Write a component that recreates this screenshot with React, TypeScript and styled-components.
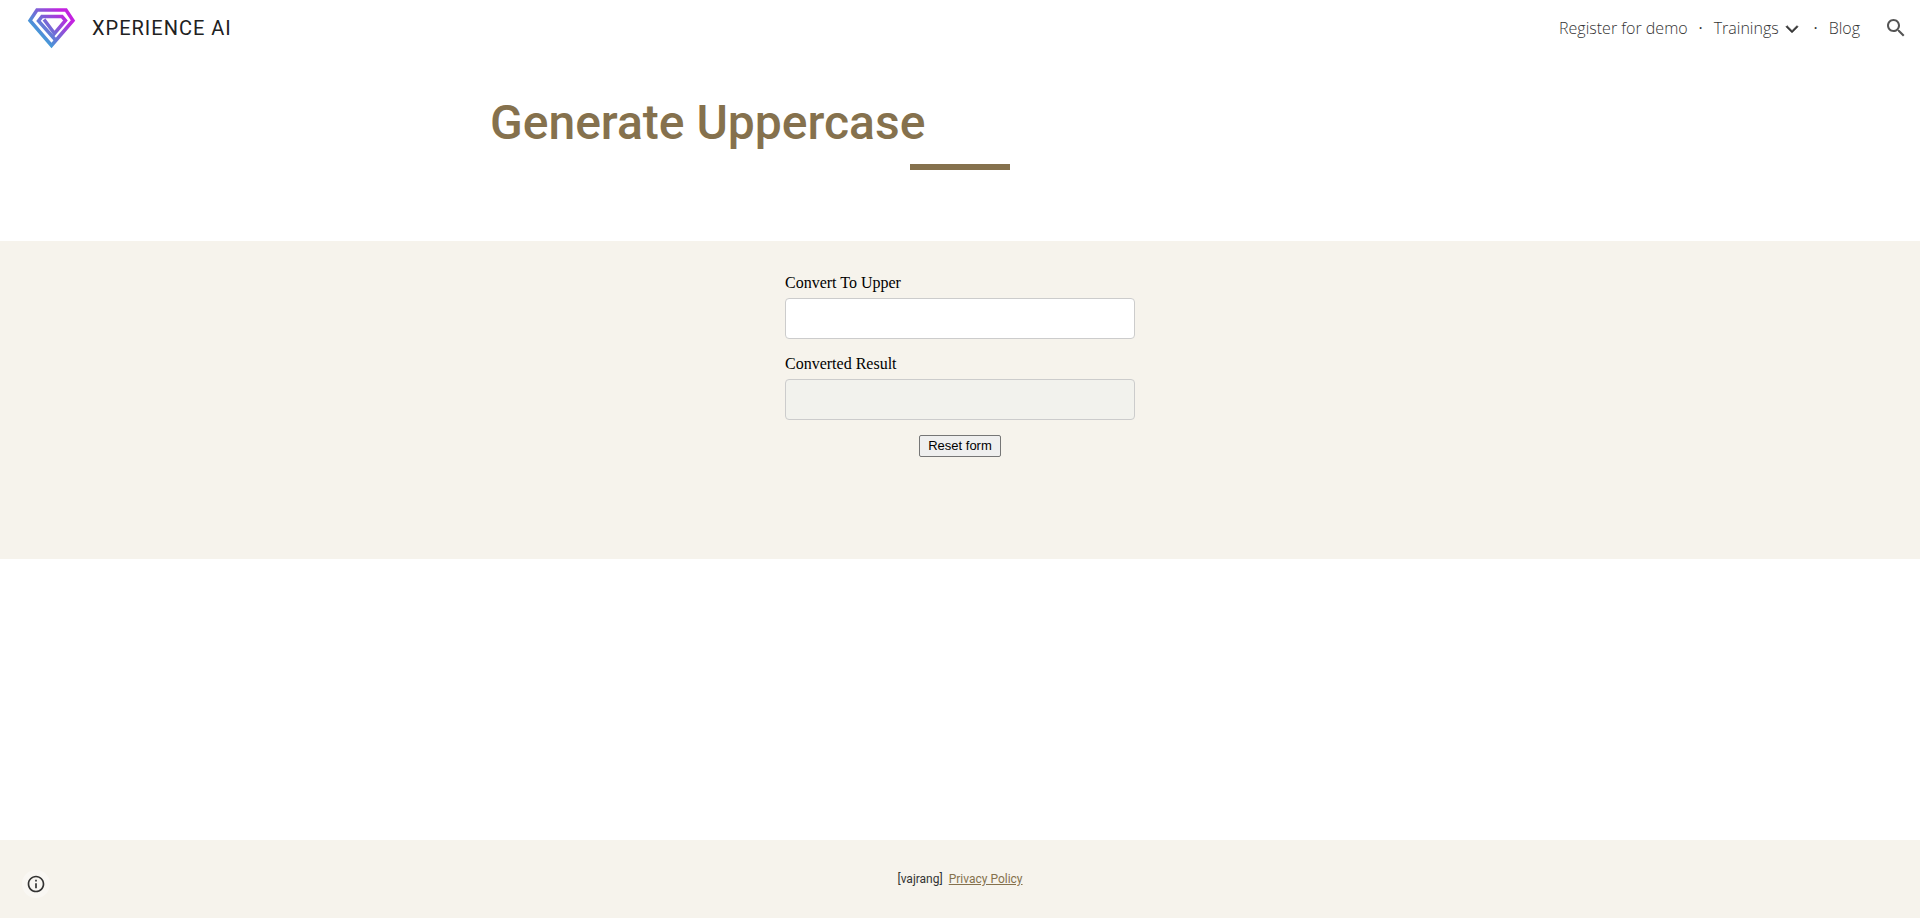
import React, { useState } from "react";
import styled, { createGlobalStyle } from "styled-components";

const GlobalStyle = createGlobalStyle`
  *, *::before, *::after { box-sizing: border-box; }
  body { margin: 0; background: #fff; color: #212121; font-family: Roboto, sans-serif; }
`;

const Page = styled.div`
  min-height: 100vh;
  display: flex;
  flex-direction: column;
`;

const Header = styled.header`
  height: 56px;
  padding: 0 6px 0 24px;
  display: flex;
  align-items: center;
  justify-content: space-between;
`;

const Brand = styled.a`
  display: flex;
  align-items: center;
  gap: 16px;
  color: #212121;
  text-decoration: none;
  font-size: 20px;
  line-height: 24px;
  letter-spacing: 1px;
`;

const Logo = styled.svg`
  width: 52px;
  height: 44px;
`;

const Nav = styled.nav`
  display: flex;
  align-items: center;
  font-family: "Open Sans", sans-serif;
  font-size: 16px;
  font-weight: 300;
  line-height: 24px;
  color: #333;
`;

const NavLink = styled.a`
  color: inherit;
  text-decoration: none;
`;

const Dot = styled.span`
  width: 26px;
  text-align: center;
  font-weight: 400;
`;

const IconButton = styled.button`
  display: flex;
  align-items: center;
  justify-content: center;
  width: 24px;
  height: 24px;
  padding: 0;
  border: 0;
  background: none;
  color: #333;
`;

const ExpandButton = styled(IconButton)`
  padding: 2px 0 0 2px;
`;

const SearchButton = styled(IconButton)`
  width: 36px;
  height: 40px;
  margin-left: 18px;
  color: #555;
`;

const Hero = styled.section`
  height: 185px;
  padding-top: 32px;
`;

const Title = styled.h1`
  max-width: 940px;
  margin: 0 auto;
  color: #85714d;
  font-size: 48px;
  font-weight: 500;
  line-height: 70px;
`;

const Rule = styled.hr`
  width: 100px;
  height: 6px;
  margin: 6px auto 0;
  border: 0;
  background: #85714d;
`;

const FormBand = styled.main`
  height: 318px;
  padding: 32px 16px;
  background: #f6f3ec;
`;

const Form = styled.form`
  max-width: 350px;
  margin: 0 auto;
  display: flex;
  flex-direction: column;
  align-items: center;
  gap: 15px;
`;

const Field = styled.label`
  width: 100%;
  display: flex;
  flex-direction: column;
  gap: 6px;
  color: #000;
  font-family: "Liberation Serif", serif;
  font-size: 16px;
  line-height: 19px;
`;

const TextInput = styled.input`
  width: 100%;
  height: 41px;
  padding: 8px 12px;
  border: 1px solid #ccc;
  border-radius: 4px;
  background: #fff;
  font-family: inherit;
  font-size: 16px;

  &:read-only { background: #f2f2ed; }
`;

const ResetButton = styled.button`
  height: 22px;
  padding: 1px 8px;
  border: 1px solid #767676;
  border-radius: 2px;
  background: #efefef;
  color: #000;
  font-family: "Liberation Sans", Arial, sans-serif;
  font-size: 13px;
  line-height: 16px;
`;

const Footer = styled.footer`
  height: 78px;
  margin-top: auto;
  padding: 0 24px;
  display: grid;
  grid-template-columns: 1fr auto 1fr;
  align-items: center;
  background: #f6f3ec;
`;

const InfoButton = styled(IconButton)`
  width: 28px;
  height: 28px;
  margin: 10px 0 0 -2px;
  border-radius: 50%;
  background: #f9f7f3;
`;

const FooterText = styled.p`
  margin: 0;
  font-size: 12px;
  line-height: 20px;
  color: #333;
`;

const FooterLink = styled.a`
  margin-left: 6px;
  color: #85714d;
`;

export default function App() {
  const [text, setText] = useState("");

  return (
    <Page>
      <GlobalStyle />
      <Header>
        <Brand href="#">
          <Logo viewBox="0 0 52 44" aria-hidden="true">
            <defs>
              <linearGradient id="gem" x1="16" y1="34" x2="42" y2="10" gradientUnits="userSpaceOnUse">
                <stop offset="0" stopColor="#38a6d8" />
                <stop offset="0.5" stopColor="#7b62d6" />
                <stop offset="1" stopColor="#c322e0" />
              </linearGradient>
            </defs>
            <g fill="none" stroke="url(#gem)" strokeWidth="3.500">
              <path d="M13 4H42L49 14.500L27.500 39.500L6 14.500Z" />
              <path d="M31.500 34L14.500 15L18 10.500H38L41.500 14.500L30.500 27.500L20 13.500" />
            </g>
          </Logo>
          XPERIENCE AI
        </Brand>
        <Nav>
          <NavLink href="#">Register for demo</NavLink>
          <Dot>·</Dot>
          <NavLink href="#">Trainings</NavLink>
          <ExpandButton type="button" aria-label="Expand Trainings">
            <svg width="18" height="18" viewBox="0 0 24 24" fill="currentColor" aria-hidden="true">
              <path d="M5.410 7.590L4 9l8 8 8-8-1.410-1.410L12 14.170z" stroke="currentColor" />
            </svg>
          </ExpandButton>
          <Dot>·</Dot>
          <NavLink href="#">Blog</NavLink>
          <SearchButton type="button" aria-label="Search">
            <svg width="24" height="24" viewBox="0 0 24 24" fill="currentColor" aria-hidden="true">
              <path d="M15.500 14h-.79l-.28-.27C15.410 12.590 16 11.110 16 9.500 16 5.910 13.090 3 9.500 3S3 5.910 3 9.500 5.910 16 9.500 16c1.610 0 3.090-.59 4.230-1.570l.27.28v.79l5 4.990L20.490 19l-4.990-5zm-6 0C7.010 14 5 11.990 5 9.500S7.010 5 9.500 5 14 7.010 14 9.500 11.990 14 9.500 14z" />
            </svg>
          </SearchButton>
        </Nav>
      </Header>
      <Hero>
        <Title>Generate Uppercase</Title>
        <Rule />
      </Hero>
      <FormBand>
        <Form onReset={() => setText("")}>
          <Field>
            Convert To Upper
            <TextInput type="text" value={text} onChange={(e) => setText(e.target.value)} />
          </Field>
          <Field>
            Converted Result
            <TextInput type="text" value={text.toUpperCase()} readOnly />
          </Field>
          <ResetButton type="reset">Reset form</ResetButton>
        </Form>
      </FormBand>
      <Footer>
        <InfoButton type="button" aria-label="Site information">
          <svg width="20" height="20" viewBox="0 0 24 24" fill="currentColor" aria-hidden="true">
            <path d="M11 17h2v-6h-2v6zm1-15C6.480 2 2 6.480 2 12s4.480 10 10 10 10-4.480 10-10S17.520 2 12 2zm0 18c-4.410 0-8-3.590-8-8s3.590-8 8-8 8 3.590 8 8-3.590 8-8 8zM11 9h2V7h-2v2z" />
          </svg>
        </InfoButton>
        <FooterText>
          [vajrang]
          <FooterLink href="#">Privacy Policy</FooterLink>
        </FooterText>
      </Footer>
    </Page>
  );
}
